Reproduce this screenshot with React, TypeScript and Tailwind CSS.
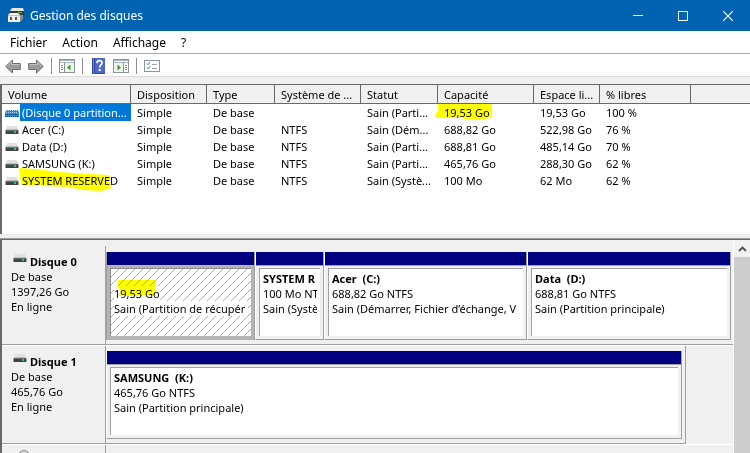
import React from "react";

type Volume = {
  name: string;
  fs: string;
  status: string;
  capacity: string;
  free: string;
  percent: string;
  selected?: boolean;
};

const volumes: Volume[] = [
  { name: "(Disque 0 partition...", fs: "", status: "Sain (Parti...", capacity: "19,53 Go", free: "19,53 Go", percent: "100 %", selected: true },
  { name: "Acer (C:)", fs: "NTFS", status: "Sain (Dém...", capacity: "688,82 Go", free: "522,98 Go", percent: "76 %" },
  { name: "Data (D:)", fs: "NTFS", status: "Sain (Parti...", capacity: "688,81 Go", free: "485,14 Go", percent: "70 %" },
  { name: "SAMSUNG (K:)", fs: "NTFS", status: "Sain (Parti...", capacity: "465,76 Go", free: "288,30 Go", percent: "62 %" },
  { name: "SYSTEM RESERVED", fs: "NTFS", status: "Sain (Systè...", capacity: "100 Mo", free: "62 Mo", percent: "62 %" },
];

const headers = ["Volume", "Disposition", "Type", "Système de ...", "Statut", "Capacité", "Espace li...", "% libres"];

function DriveIcon({ selected = false }: { selected?: boolean }) {
  if (selected) {
    return (
      <svg width="14" height="8" viewBox="0 0 14 8" className="shrink-0" aria-hidden="true">
        <path d="M1 1h12l1 3v4H0V4z" fill="#2f86cb" />
        <path d="M1 1.5h12M1 3.5h12" stroke="#b4daf5" strokeDasharray="1 1" />
        <path d="M0 5.5h14M0 7.5h14" stroke="#0c4a80" strokeDasharray="1 1" />
      </svg>
    );
  }
  return (
    <svg width="14" height="8" viewBox="0 0 14 8" className="shrink-0" aria-hidden="true">
      <path d="M2 0h10l1 4H1z" fill="#dfe1e1" />
      <path d="M1 3.5h12" stroke="#b9bdbd" />
      <rect x="0.5" y="4" width="13" height="4" rx="0.5" fill="#3f4745" />
      <path d="M1 4.5h12" stroke="#6b7371" />
      <rect x="9" y="5" width="2" height="2" fill="#3fc05c" />
    </svg>
  );
}

function AppIcon() {
  return (
    <svg width="17" height="15" viewBox="0 0 17 15" aria-hidden="true">
      <path d="M4 0h11l1 3H2z" fill="#e6e6e3" />
      <path d="M2 3h14v4H2z" fill="#3b3a38" />
      <path d="M10 4.5h4" stroke="#6cc24a" />
      <path d="M0 7l2-2h8l2 2v7H0z" fill="#f1f1ef" />
      <path d="M0 7.5h12" stroke="#c4c4c0" />
      <rect x="2" y="9" width="2" height="3" fill="#555" />
      <rect x="7" y="9" width="2" height="3" fill="#555" />
      <path d="M12 7h3v4l-3 3z" fill="#8c8c8a" />
    </svg>
  );
}

function Arrow({ right = false }: { right?: boolean }) {
  return (
    <svg width="16" height="15" viewBox="0 0 16 15" className={right ? "-scale-x-100" : ""} aria-hidden="true">
      <path d="M.7 7.5 7.5 1v3.5h7.8v6H7.5V14z" fill="#9b9b9b" stroke="#6f6f6f" />
      <path d="M2.5 7 6.5 3.2v2.3h7.8" fill="none" stroke="#c4c4c4" />
    </svg>
  );
}

function PaneIcon({ right = false }: { right?: boolean }) {
  return (
    <svg width="16" height="14" viewBox="0 0 16 14" className={right ? "-scale-x-100" : ""} aria-hidden="true">
      <rect x=".5" y=".5" width="15" height="13" fill="#fff" stroke="#8b949d" />
      <path d="M1 1.5h14M1 3.5h14" stroke="#a7b1bc" />
      <path d="M5.5 4v9" stroke="#8b949d" />
      <path d="M2 6.5h2M2 8.5h2M2 10.5h2" stroke="#6a8db5" />
      <path d="M6 4h9v9H6z" fill="#f0f5ec" />
      <path d="M11.5 5.5v6L8 8.5z" fill="#3f9c35" />
    </svg>
  );
}

function HelpIcon() {
  return (
    <svg width="13" height="16" viewBox="0 0 13 16" aria-hidden="true">
      <rect width="13" height="16" fill="#2f479f" />
      <path d="M3 0h10v15H3z" fill="#4d68c8" />
      <path d="M1.5 0v16" stroke="#6f83d0" />
      <path d="M5 5.2C5 3.4 6.1 2.7 7.5 2.7s2.5.9 2.5 2.3c0 1.9-2.4 2-2.4 4.5" fill="none" stroke="#fff" strokeWidth="1.7" />
      <rect x="6.7" y="11" width="2" height="2" fill="#fff" />
    </svg>
  );
}

function ChecklistIcon() {
  return (
    <svg width="16" height="12" viewBox="0 0 16 12" aria-hidden="true">
      <rect x=".5" y=".5" width="15" height="11" fill="#fff" stroke="#8b949d" />
      <path d="M3 3.5l1 1.200L6 2M3 7.5l1 1.200L6 6.2" fill="none" stroke="#2d78c8" />
      <path d="M8 4.5h5M8 8.5h5" stroke="#9aa2aa" />
    </svg>
  );
}

function ToolButton({ label, children }: { label: string; children: React.ReactNode }) {
  return (
    <button type="button" aria-label={label} title={label} className="flex h-5 w-4 items-center justify-center">
      {children}
    </button>
  );
}

function Divider() {
  return <span className="h-4 w-px bg-[#8f8f8f]" />;
}

function TitleBar() {
  return (
    <header className="flex h-[31px] shrink-0 items-center bg-[#0063b1] text-white">
      <div className="flex flex-1 items-center gap-[5px] pl-2">
        <AppIcon />
        <h1 className="text-[12px] leading-4">Gestion des disques</h1>
      </div>
      <button type="button" aria-label="Réduire" className="flex h-full w-[45px] items-center justify-center">
        <svg width="10" height="10" viewBox="0 0 10 10"><path d="M0 4.5h10" stroke="#fff" /></svg>
      </button>
      <button type="button" aria-label="Agrandir" className="flex h-full w-[45px] items-center justify-center">
        <svg width="10" height="10" viewBox="0 0 10 10"><rect x=".5" y=".5" width="9" height="9" fill="none" stroke="#fff" /></svg>
      </button>
      <button type="button" aria-label="Fermer" className="flex h-full w-[45px] items-center justify-center">
        <svg width="10" height="10" viewBox="0 0 10 10"><path d="M0 0l10 10M10 0L0 10" stroke="#fff" strokeWidth="1.2" /></svg>
      </button>
    </header>
  );
}

function VolumeTable() {
  return (
    <section className="h-[150px] shrink-0 overflow-hidden border-l-2 border-t border-[#696969] bg-white">
      <table className="w-full table-fixed border-separate border-spacing-0 text-left">
        <colgroup>
          <col className="w-[129px]" />
          <col className="w-[76px]" />
          <col className="w-[68px]" />
          <col className="w-[86px]" />
          <col className="w-[77px]" />
          <col className="w-[96px]" />
          <col className="w-[66px]" />
          <col className="w-[91px]" />
          <col />
        </colgroup>
        <thead>
          <tr className="h-[19px] bg-[#f0f0f0]">
            {headers.map((h) => (
              <th key={h} scope="col" className="whitespace-nowrap border-r border-b border-[#696969] p-0 pl-1.5 font-normal">
                {h}
              </th>
            ))}
            <td className="border-b border-[#696969] p-0" />
          </tr>
        </thead>
        <tbody>
          {volumes.map((v, i) => (
            <tr key={v.name} className="h-[17px] whitespace-nowrap">
              <td className="relative p-0">
                {i === 4 && (
                  <svg className="absolute top-[-4px] left-[17px]" width="93" height="24" viewBox="0 0 93 24" aria-hidden="true">
                    <path d="M0 0 16 1 40 4 70 6 90 7 92 20 82 23 64 22 50 19 26 18 2 17z" fill="#ffff00" />
                  </svg>
                )}
                <div className="relative flex items-center gap-px pl-[3px]">
                  <DriveIcon selected={v.selected} />
                  <span className={v.selected ? "flex-1 bg-[#0078d7] pl-0.5 text-white" : "flex-1 pl-0.5"}>{v.name}</span>
                </div>
              </td>
              <td className="p-0 pl-1.5">Simple</td>
              <td className="p-0 pl-1.5">De base</td>
              <td className="p-0 pl-1.5">{v.fs}</td>
              <td className="p-0 pl-1.5">{v.status}</td>
              <td className="relative p-0 pl-1.5">
                {i === 0 && (
                  <svg className="absolute top-0 left-[-2px]" width="57" height="16" viewBox="0 0 57 16" aria-hidden="true">
                    <path d="M2 0H56V13L50 15 32 16 26 14H0V9L2 8z" fill="#ffff00" />
                  </svg>
                )}
                <span className="relative">{v.capacity}</span>
              </td>
              <td className="p-0 pl-1.5">{v.free}</td>
              <td className="p-0 pl-1.5">{v.percent}</td>
              <td className="p-0" />
            </tr>
          ))}
        </tbody>
      </table>
    </section>
  );
}

function Partition({ name, size, status }: { name: string; size: string; status: string }) {
  return (
    <div className="min-w-0 border-r border-b border-l border-[#a0a0a0] border-l-white">
      <div className="h-[13px] bg-[#000080]" />
      <div className="border-t border-[#a0a0a0] px-[3px] pt-0.5 pb-[3px]">
        <div className="h-[68px] border-t border-l border-[#a0a0a0] bg-white px-[3px] pt-0.5">
          <div className="overflow-hidden whitespace-pre leading-[15px]">
            <p className="font-bold">{name}</p>
            <p>{size}</p>
            <p>{status}</p>
          </div>
        </div>
      </div>
    </div>
  );
}

function RecoveryPartition() {
  return (
    <div className="min-w-0 border-r border-l border-[#a0a0a0] bg-[#b4b4b4]">
      <div className="h-[13px] bg-[#000080]" />
      <div className="px-[3px] pt-[3px] pb-1">
        <div className="relative h-[68px] overflow-hidden border-t border-l border-[#8c8c8c] bg-white px-[3px] pt-[17px]">
          <svg className="absolute inset-0 h-full w-full" aria-hidden="true">
            <defs>
              <pattern id="hatch" width="8" height="8" patternUnits="userSpaceOnUse">
                <path d="M-1 9 9-1M-1 1 1-1M7 9l2-2" stroke="#8a8a8a" strokeWidth="0.7" />
              </pattern>
            </defs>
            <rect width="100%" height="100%" fill="url(#hatch)" />
          </svg>
          <div className="relative overflow-hidden whitespace-pre leading-[15px]">
            <p><span className="bg-white">19,53 Go</span></p>
            <p className="bg-white">Sain (Partition de récupér</p>
          </div>
          <svg className="absolute top-[11px] left-[7px] mix-blend-multiply" width="38" height="17" viewBox="0 0 38 17" aria-hidden="true">
            <path d="M0 0H37V15H26L24 16H2V9L0 8z" fill="#ffff00" />
          </svg>
        </div>
      </div>
    </div>
  );
}

function DiskLabel({ name, size }: { name: string; size: string }) {
  return (
    <div className="border-r border-b border-[#a0a0a0] pt-2 pl-[9px] leading-[15px]">
      <div className="flex items-start gap-[3px] pl-0.5">
        <DriveIcon />
        <h2 className="font-bold">{name}</h2>
      </div>
      <p>De base</p>
      <p>{size}</p>
      <p>En ligne</p>
    </div>
  );
}

function DiskView() {
  return (
    <section className="flex min-h-0 flex-1 border-l-2 border-t border-[#696969]">
      <div className="min-w-0 flex-1 overflow-hidden pt-[6px]">
        <div className="grid h-[99px] grid-cols-[104px_1fr]">
          <DiskLabel name="Disque 0" size="1397,26 Go" />
          <div className="border-b border-[#a0a0a0] pt-[6px] pr-0.5 pb-1">
            <div className="grid h-full grid-cols-[149fr_69fr_203fr_204fr]">
              <RecoveryPartition />
              <Partition name="SYSTEM R" size="100 Mo NT" status="Sain (Systè" />
              <Partition name="Acer  (C:)" size="688,82 Go NTFS" status="Sain (Démarrer, Fichier d’échange, V" />
              <Partition name="Data  (D:)" size="688,81 Go NTFS" status="Sain (Partition principale)" />
            </div>
          </div>
        </div>
        <div className="grid h-[99px] grid-cols-[104px_580fr_47fr] border-t border-white">
          <DiskLabel name="Disque 1" size="465,76 Go" />
          <div className="grid border-r border-b border-[#a0a0a0] pt-[5px] pr-[3px] pb-1">
            <Partition name="SAMSUNG  (K:)" size="465,76 Go NTFS" status="Sain (Partition principale)" />
          </div>
        </div>
        <div className="grid h-[99px] grid-cols-[104px_1fr] border-t border-white">
          <div className="border-r border-[#a0a0a0] pt-1 pl-4">
            <svg width="12" height="12" viewBox="0 0 12 12" aria-hidden="true">
              <circle cx="6" cy="6" r="4.5" fill="#e4e4e4" stroke="#9c9c9c" strokeWidth="1.5" />
              <circle cx="6" cy="6" r="1.5" fill="#fff" stroke="#9c9c9c" />
            </svg>
          </div>
        </div>
      </div>
      <div className="flex w-[17px] flex-col border-l border-white bg-[#cdcdcd]">
        <button type="button" aria-label="Défiler vers le haut" className="flex h-[17px] items-center justify-center bg-[#f0f0f0]">
          <svg width="9" height="6" viewBox="0 0 9 6"><path d="M1 5l3.5-3.5L8 5" fill="none" stroke="#505050" strokeWidth="1.8" /></svg>
        </button>
      </div>
    </section>
  );
}

export default function App() {
  return (
    <div className="flex h-screen flex-col overflow-hidden bg-[#f0f0f0] font-['Noto_Sans','Open_Sans',sans-serif] text-[11px] leading-[17px] text-black">
      <TitleBar />
      <nav className="flex h-[23px] shrink-0 items-center gap-[15px] border-b border-[#a9a9a9] bg-white pl-2.5 text-[12px]">
        <button type="button">Fichier</button>
        <button type="button">Action</button>
        <button type="button">Affichage</button>
        <button type="button">?</button>
      </nav>
      <div className="flex h-[23px] shrink-0 items-center gap-[7px] border-b border-[#dcdcdc] bg-white pt-0.5 pl-[5px]">
        <ToolButton label="Précédent"><Arrow /></ToolButton>
        <ToolButton label="Suivant"><Arrow right /></ToolButton>
        <Divider />
        <ToolButton label="Afficher l'arborescence"><PaneIcon /></ToolButton>
        <Divider />
        <ToolButton label="Aide"><HelpIcon /></ToolButton>
        <ToolButton label="Afficher le volet Actions"><PaneIcon right /></ToolButton>
        <Divider />
        <ToolButton label="Propriétés"><ChecklistIcon /></ToolButton>
      </div>
      <div className="h-[7px] shrink-0" />
      <VolumeTable />
      <div className="h-[5px] shrink-0 border-b border-[#a0a0a0]" />
      <DiskView />
    </div>
  );
}
